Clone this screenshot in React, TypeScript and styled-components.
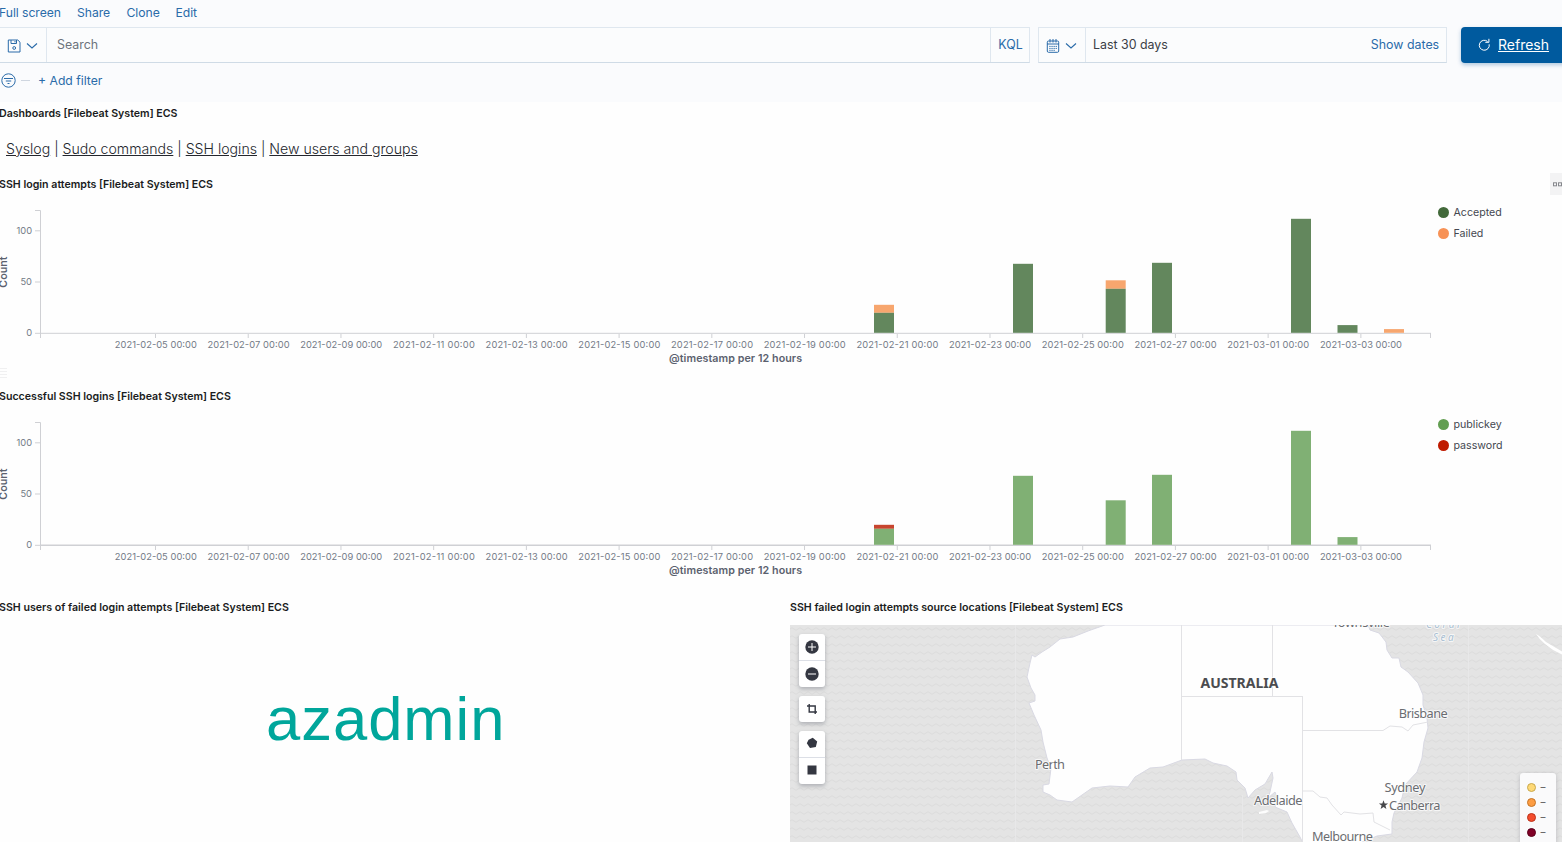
import React from 'react';
import styled, { createGlobalStyle } from 'styled-components';

const Global = createGlobalStyle`
  *, *::before, *::after { box-sizing: border-box; }
  html, body { margin: 0; padding: 0; height: 100%; overflow: hidden; background: #fefefe; }
  body { font-family: Inter, "Liberation Sans", sans-serif; font-size: 13px; color: #343741; }
  svg { display: block; flex: none; }
`;

const Page = styled.div`
  width: 1562px;
  height: 842px;
  overflow: hidden;
  display: flex;
  flex-direction: column;
`;

const Header = styled.header`
  height: 102px;
  flex: none;
  background: #fafbfd;
`;

const Menu = styled.nav`
  height: 27px;
  display: flex;
  align-items: flex-start;
  gap: 16px;
`;

const MenuLink = styled.a<{ $w: number }>`
  width: ${p => p.$w}px;
  color: #2a6ba9;
  font-size: 12.2px;
  letter-spacing: -0.05px;
  line-height: 25px;
  white-space: nowrap;
  &:first-child { text-indent: -1px; }
`;

const QueryRow = styled.div`
  display: flex;
  height: 36px;
`;

const Field = styled.div<{ $w: number; $ml?: number }>`
  width: ${p => p.$w}px;
  flex: none;
  margin-left: ${p => p.$ml ?? 0}px;
  height: 36px;
  display: flex;
  background: #fbfcfd;
  border: 1px solid #dfe7ef;
  border-bottom-color: #cfdbe6;
  ${p => (p.$ml ? '' : 'border-left: 0;')}
`;

const FieldButton = styled.div<{ $w: number; $pad: number }>`
  width: ${p => p.$w}px;
  padding: 2px 0 0 ${p => p.$pad}px;
  display: flex;
  align-items: center;
  gap: 5px;
  border-right: 1px solid #dfe7ef;
`;

const FieldText = styled.div<{ $color: string; $pad: number }>`
  flex: 1;
  padding-left: ${p => p.$pad}px;
  font-size: 12.4px;
  line-height: 34px;
  color: ${p => p.$color};
`;

const FieldAction = styled.div<{ $w: number; $ruled?: boolean }>`
  width: ${p => p.$w}px;
  padding-left: ${p => (p.$ruled ? 1 : 0)}px;
  border-left: ${p => (p.$ruled ? '1px solid #dfe7ef' : '0')};
  text-align: center;
  white-space: nowrap;
  color: #2a6ba9;
  font-size: 12.4px;
  line-height: 34px;
`;

const RefreshButton = styled.button`
  width: 110px;
  height: 36px;
  flex: none;
  margin-left: 14px;
  padding: 0 0 1px 16px;
  display: flex;
  align-items: center;
  gap: 7px;
  border: 0;
  border-radius: 4px;
  background: #005a9e;
  box-shadow: 0 2px 4px rgba(0, 80, 150, 0.3);
  color: #fff;
  font: 400 14px Inter, sans-serif;
  text-decoration: underline;
`;

const FilterRow = styled.div`
  height: 34px;
  padding-left: 1px;
  display: flex;
  align-items: center;
  color: #2a6ba9;
  font-size: 12.2px;
`;

const Dash = styled.span`
  width: 9px;
  height: 1px;
  margin: 0 8px 0 5px;
  background: #cfd6e0;
`;

const PanelTitle = styled.h2<{ $h: number; $flush?: boolean }>`
  margin: 0;
  height: ${p => p.$h}px;
  line-height: 23px;
  font-size: 10.63px;
  font-weight: 600;
  color: #1a1c21;
  white-space: nowrap;
  text-indent: ${p => (p.$flush ? 0 : -1)}px;
`;

const LinksPanel = styled.section`
  height: 71px;
  flex: none;
`;

const Links = styled.div`
  padding-left: 6px;
  height: 47px;
  line-height: 46px;
  font-size: 14.12px;
  font-weight: 300;
  color: #24262d;
  white-space: pre;
  a { text-decoration: underline; }
`;

const ChartPanel = styled.section<{ $h: number }>`
  height: ${p => p.$h}px;
  flex: none;
`;

const PanelHead = styled.div`
  display: flex;
  justify-content: space-between;
  height: 23px;
`;

const PanelMenu = styled.div`
  width: 12px;
  height: 22px;
  display: flex;
  align-items: center;
  padding-left: 3px;
  background: #f3f3f4;
`;

const ChartRow = styled.div`
  display: flex;
  height: 188px;
`;

const Legend = styled.ul`
  list-style: none;
  margin: 0;
  padding: 6px 0 0 1.5px;
`;

const LegendItem = styled.li`
  display: flex;
  align-items: center;
  gap: 5px;
  height: 21px;
  font-size: 10.65px;
  color: #444750;
`;

const Dot = styled.span<{ $color: string }>`
  width: 11px;
  height: 11px;
  border-radius: 50%;
  background: ${p => p.$color};
`;

const BottomRow = styled.div`
  display: flex;
  flex: 1;
`;

const CloudPanel = styled.section`
  width: 790px;
`;

const Cloud = styled.div`
  padding: 60px 0 0 266px;
  font: 61.5px/80px "Liberation Sans", sans-serif;
  letter-spacing: 1px;
  color: #00a69b;
`;

const MapPanel = styled.section`
  width: 772px;
`;

const MapArea = styled.div`
  position: relative;
  height: 217px;
  overflow: hidden;
`;

const MapTools = styled.div`
  position: absolute;
  left: 9px;
  top: 9px;
  display: flex;
  flex-direction: column;
  gap: 9px;
`;

const ToolGroup = styled.div`
  width: 26px;
  border-radius: 3px;
  background: #fff;
  box-shadow: 0 2px 4px rgba(70, 75, 90, 0.35);
`;

const Tool = styled.div<{ $lift?: boolean }>`
  height: 26px;
  padding-bottom: ${p => (p.$lift ? 2 : 0)}px;
  display: flex;
  align-items: center;
  justify-content: center;
  & + & { height: 27px; border-top: 1px solid #dcdfe6; }
`;

const MapLegend = styled.div`
  position: absolute;
  left: 730px;
  top: 148px;
  width: 36px;
  height: 80px;
  padding: 7px 0 0 6.5px;
  border-radius: 3px;
  background: #fafafb;
  box-shadow: 0 1px 4px rgba(70, 75, 90, 0.25);
`;

const MapLegendItem = styled.div`
  height: 15px;
  display: flex;
  align-items: center;
  gap: 5px;
  font-size: 10px;
  color: #555;
`;

const Swatch = styled.span<{ $fill: string; $edge: string }>`
  width: 9px;
  height: 9px;
  border-radius: 50%;
  background: ${p => p.$fill};
  border: 1px solid ${p => p.$edge};
`;

const Chevron = () => (
  <svg width="12" height="8" viewBox="0 0 12 8" fill="none" stroke="#2a6ba9" strokeWidth="1.1">
    <path d="M1 1.5 6 6 11 1.5" />
  </svg>
);

const SaveIcon = () => (
  <svg width="14" height="14" viewBox="0 0 14 14" fill="none" stroke="#2a6ba9">
    <path d="M1.3 1h9.5L13 3.2V13H1.3Z" />
    <path d="M4 1v3.5h5.5V1M8 2v1.4" />
    <circle cx="7.2" cy="9" r="1.4" />
  </svg>
);

const CalendarIcon = () => (
  <svg width="14" height="14" viewBox="0 0 14 14" fill="none" stroke="#2a6ba9">
    <rect x="1.3" y="2" width="11.4" height="11.3" rx="1.2" />
    <path d="M1 5h12M4 0v3.5M7 0v3.5M10 0v3.5" />
    <path d="M3.3 7.4h8M3.3 9.4h8M3.3 11.3h6" strokeDasharray="1.3 .8" />
  </svg>
);

const FilterIcon = () => (
  <svg width="15" height="15" viewBox="0 0 15 15" fill="none" stroke="#2a6ba9">
    <circle cx="7.5" cy="7.5" r="6.7" />
    <path d="M3 5.5h9M4.8 8h5.4M6.5 10.5h2" />
  </svg>
);

const RefreshIcon = () => (
  <svg width="14" height="14" viewBox="0 0 14 14" fill="none" stroke="#fff">
    <path d="M10.6 3.5A5 5 0 1 0 12.2 6.3" />
    <path d="M8.3 4.3h3.6V.8" />
  </svg>
);

const DATES = ['02-05', '02-07', '02-09', '02-11', '02-13', '02-15', '02-17', '02-19', '02-21', '02-23', '02-25', '02-27', '03-01', '03-03'];

type Bar = { x: number; top: number; bottom: number; color: string };

const AxisText = styled.text`
  font: 9.3px Inter, sans-serif;
  fill: #737a86;
`;

const AxisTitle = styled.text`
  font: 600 10.7px Inter, sans-serif;
  fill: #5b616e;
`;

const Chart = ({ bars, axisWidth = 1 }: { bars: Bar[]; axisWidth?: number }) => (
  <svg width="1436" height="188" viewBox="0 0 1436 188">
    <g stroke="#cfd0d4" strokeWidth="1" fill="none">
      <path d="M35 14.5H40.5V142M35 34.8H40M35 86H40M35 137.3H40" />
      <path d="M40 137.3H1431" strokeWidth={axisWidth} />
      <path d="M1430.5 137V142" />
      {DATES.map((d, i) => (
        <path key={d} d={`M${155.5 + i * 92.72} 138v4`} />
      ))}
    </g>
    {bars.map(b => (
      <rect key={`${b.x}-${b.top}`} x={b.x} y={b.top - 0.2} width="20" height={b.bottom - b.top} fill={b.color} />
    ))}
    <AxisText x="32" y="38" textAnchor="end">100</AxisText>
    <AxisText x="32" y="89.3" textAnchor="end">50</AxisText>
    <AxisText x="32" y="140.3" textAnchor="end">0</AxisText>
    {DATES.map((d, i) => (
      <AxisText key={d} x={155.8 + i * 92.7} y="152.3" textAnchor="middle" textLength="82">{`2021-${d} 00:00`}</AxisText>
    ))}
    <AxisTitle x="735.5" y="165.5" textAnchor="middle" textLength="133">@timestamp per 12 hours</AxisTitle>
    <AxisTitle textAnchor="middle" transform="translate(6.5 76) rotate(-90)">Count</AxisTitle>
  </svg>
);

const G = '#63875d';
const O = '#f7a66e';
const L = '#80b074';

const ATTEMPTS: Bar[] = [
  { x: 874, top: 109, bottom: 117, color: O },
  { x: 874, top: 117, bottom: 137, color: G },
  { x: 1013, top: 68, bottom: 137, color: G },
  { x: 1105.7, top: 84.5, bottom: 93, color: O },
  { x: 1105.7, top: 93, bottom: 137, color: G },
  { x: 1152, top: 67, bottom: 137, color: G },
  { x: 1291, top: 23, bottom: 137, color: G },
  { x: 1337.5, top: 129.3, bottom: 137, color: G },
  { x: 1384, top: 133.3, bottom: 137, color: O },
];

const SUCCESSES: Bar[] = [
  { x: 874, top: 117, bottom: 121, color: '#c8452f' },
  { x: 874, top: 121, bottom: 137, color: L },
  { x: 1013, top: 68, bottom: 137, color: L },
  { x: 1105.7, top: 92.5, bottom: 137, color: L },
  { x: 1152, top: 67, bottom: 137, color: L },
  { x: 1291, top: 23, bottom: 137, color: L },
  { x: 1337.5, top: 129.3, bottom: 137, color: L },
];

const MapLabel = styled.text<{ $tone?: 'country' | 'water' }>`
  font-family: "Noto Sans", sans-serif;
  font-size: ${p => (p.$tone === 'country' ? 14.2 : p.$tone === 'water' ? 10 : 12.8)}px;
  font-weight: ${p => (p.$tone === 'country' ? 700 : 400)};
  font-style: ${p => (p.$tone === 'water' ? 'italic' : 'normal')};
  letter-spacing: ${p => (p.$tone === 'water' ? 2.5 : 0)}px;
  fill: ${p => (p.$tone === 'country' ? '#4b4c4f' : p.$tone === 'water' ? '#a9bfd3' : '#6b6d71')};
  stroke: #fff;
  stroke-opacity: 0.7;
  stroke-width: 2px;
  stroke-linejoin: round;
  paint-order: stroke;
`;

const COAST =
  'M315 0L298 6 283 12 270 14 260 22 252 27 245 32 242 30 240 38 237 52 241 63 245 70 245 76 239 78 244 90 251 105 253 117 257 133 261 143 259 159 253 160 253 167 260 170 267 175 282 177 292 170 302 163 320 161 338 162 345 152 360 143 373 142 392 135 415 134 423 138 437 141 446 147 447 155 455 163 458 173 465 165 475 159 482 147 483 153 480 167 478 173 485 167 488 174 485 182 497 187 502 198 510 212 513 218H570L587 211 602 209 602 197 604 188 612 173 615 160 627 147 632 133 634 117 638 103 637 93 633 80 633 70 628 58 618 47 611 42 609 33 602 33 597 25 596 17 589 8 580 5 578 0Z';

const AustraliaMap = () => (
  <svg width="772" height="217" viewBox="0 0 772 217">
    <defs>
      <pattern id="waves" width="8" height="8" patternUnits="userSpaceOnUse">
        <rect width="8" height="8" fill="#e4e4e4" />
        <path d="M0 4q2-2.4 4 0t4 0" fill="none" stroke="#dcdcdc" />
      </pattern>
    </defs>
    <rect width="772" height="217" fill="url(#waves)" />
    <path d="M225.5 0V217M452.5 170V217M678.5 0V217" stroke="#e8e8e9" />
    <path d={COAST} fill="#fefefe" stroke="#d9d9e3" strokeWidth="1" strokeLinejoin="round" />
    <path d="M469 187l8-2 2 1-3 2-7 1Z" fill="#fdfdfd" />
    <path d="M746 9q4 2 10 8l17 10v3q-10-4-18-11-6-5-9-10Z" fill="#fff" />
    <g fill="none" stroke="#e2e2e5">
      <path d="M391.5 0V135M482.5 0V71M392 71.5H512M512.5 71V217M513 105.5H593L600 101 612 102 618 106 623 100 638 97" />
      <path d="M513 166H523L530 172 537 173 542 180 551 190 554 187 570 189 583 188 584 197 600 205" />
    </g>
    <MapLabel x="542" y="2" textLength="58">Townsville</MapLabel>
    <MapLabel x="636" y="2.5" $tone="water">Coral</MapLabel>
    <MapLabel x="643" y="16" $tone="water">Sea</MapLabel>
    <MapLabel x="410.5" y="63" textLength="78" lengthAdjust="spacingAndGlyphs" $tone="country">AUSTRALIA</MapLabel>
    <MapLabel x="608.7" y="92.5" textLength="49">Brisbane</MapLabel>
    <MapLabel x="245" y="144" textLength="30">Perth</MapLabel>
    <MapLabel x="464" y="180" textLength="48.5">Adelaide</MapLabel>
    <MapLabel x="594.5" y="167" textLength="41">Sydney</MapLabel>
    <MapLabel x="599" y="184.5" textLength="51.5">Canberra</MapLabel>
    <MapLabel x="522" y="216" textLength="61">Melbourne</MapLabel>
    <path d="M593.5 175.2l1.2 3.3h3.4l-2.7 2 1 3.4-2.9-2-2.9 2 1-3.4-2.7-2h3.4Z" fill="#46474a" />
  </svg>
);

type PlotProps = {
  title: string;
  bars: Bar[];
  legend: [string, string][];
  height: number;
  menu?: boolean;
  axisWidth?: number;
};

const PlotPanel = ({ title, bars, legend, height, menu, axisWidth }: PlotProps) => (
  <ChartPanel $h={height}>
    <PanelHead>
      <PanelTitle $h={23}>{title}</PanelTitle>
      {menu && (
        <PanelMenu>
          <svg width="9" height="5" viewBox="0 0 9 5" fill="none" stroke="#85878c">
            <rect x=".5" y=".8" width="3" height="3" />
            <rect x="5.5" y=".8" width="3" height="3" />
          </svg>
        </PanelMenu>
      )}
    </PanelHead>
    <ChartRow>
      <Chart bars={bars} axisWidth={axisWidth} />
      <Legend>
        {legend.map(([name, color]) => (
          <LegendItem key={name}><Dot $color={color} />{name}</LegendItem>
        ))}
      </Legend>
    </ChartRow>
  </ChartPanel>
);

const ResizeHandle = () => (
  <svg width="8" height="10" viewBox="0 0 8 10" fill="none" stroke="#f0f0f1">
    <path d="M0 .5h7M0 3.5h7M0 6.5h7M0 9.5h7" />
  </svg>
);

const HandleSlot = styled.div`
  height: 0;
  margin-top: -17px;
  margin-bottom: 17px;
`;

export default function App() {
  return (
    <Page>
      <Global />
      <Header>
        <Menu>
          <MenuLink $w={61}>Full screen</MenuLink>
          <MenuLink $w={33.5}>Share</MenuLink>
          <MenuLink $w={33}>Clone</MenuLink>
          <MenuLink $w={30}>Edit</MenuLink>
        </Menu>
        <QueryRow>
          <Field $w={1030}>
            <FieldButton $w={47} $pad={7}><SaveIcon /><Chevron /></FieldButton>
            <FieldText $color="#6d737c" $pad={10}>Search</FieldText>
            <FieldAction $w={39} $ruled>KQL</FieldAction>
          </Field>
          <Field $w={409} $ml={8}>
            <FieldButton $w={47} $pad={7}><CalendarIcon /><Chevron /></FieldButton>
            <FieldText $color="#3b3e46" $pad={7}>Last 30 days</FieldText>
            <FieldAction $w={82}>Show dates</FieldAction>
          </Field>
          <RefreshButton><RefreshIcon />Refresh</RefreshButton>
        </QueryRow>
        <FilterRow><FilterIcon /><Dash />+ Add filter</FilterRow>
      </Header>
      <LinksPanel>
        <PanelTitle $h={24}>Dashboards [Filebeat System] ECS</PanelTitle>
        <Links><a>Syslog</a> | <a>Sudo commands</a> | <a>SSH logins</a> | <a>New users and groups</a></Links>
      </LinksPanel>
      <PlotPanel height={211.6} title="SSH login attempts [Filebeat System] ECS" bars={ATTEMPTS} menu legend={[['Accepted', '#42693a'], ['Failed', '#f79256']]} />
      <HandleSlot><ResizeHandle /></HandleSlot>
      <PlotPanel height={211.4} title="Successful SSH logins [Filebeat System] ECS" bars={SUCCESSES} axisWidth={1.5} legend={[['publickey', '#629e51'], ['password', '#bf1b00']]} />
      <BottomRow>
        <CloudPanel>
          <PanelTitle $h={23}>SSH users of failed login attempts [Filebeat System] ECS</PanelTitle>
          <Cloud>azadmin</Cloud>
        </CloudPanel>
        <MapPanel>
          <PanelTitle $h={29} $flush>SSH failed login attempts source locations [Filebeat System] ECS</PanelTitle>
          <MapArea>
            <AustraliaMap />
            <MapTools>
              <ToolGroup>
                <Tool><svg width="14" height="14" viewBox="0 0 14 14"><circle cx="7" cy="7" r="6.7" fill="#343741" /><path d="M3 7h8M7 3v8" stroke="#fff" /></svg></Tool>
                <Tool><svg width="14" height="14" viewBox="0 0 14 14"><circle cx="7" cy="7" r="6.7" fill="#343741" /><path d="M3 7h8" stroke="#fff" /></svg></Tool>
              </ToolGroup>
              <ToolGroup>
                <Tool><svg width="12" height="12" viewBox="0 0 12 12" fill="none" stroke="#343741" strokeWidth="1.4"><path d="M3.2 1v8H11M1 3h8.2v8" /></svg></Tool>
              </ToolGroup>
              <ToolGroup>
                <Tool $lift><svg width="12" height="12" viewBox="0 0 12 12" fill="#343741"><path d="M6.8.8 11.2 4.4 9.8 10 4 11 .8 6.2 2.6 2.8Z" /></svg></Tool>
                <Tool $lift><svg width="10" height="10" viewBox="0 0 10 10" fill="#343741"><path d="M.5.5h9v9h-9Z" /></svg></Tool>
              </ToolGroup>
            </MapTools>
            <MapLegend>
              <MapLegendItem><Swatch $fill="#fed976" $edge="#c8a84e" />–</MapLegendItem>
              <MapLegendItem><Swatch $fill="#fd9d43" $edge="#c47527" />–</MapLegendItem>
              <MapLegendItem><Swatch $fill="#f44d2e" $edge="#bb3219" />–</MapLegendItem>
              <MapLegendItem><Swatch $fill="#800026" $edge="#5c001b" />–</MapLegendItem>
            </MapLegend>
          </MapArea>
        </MapPanel>
      </BottomRow>
    </Page>
  );
}
